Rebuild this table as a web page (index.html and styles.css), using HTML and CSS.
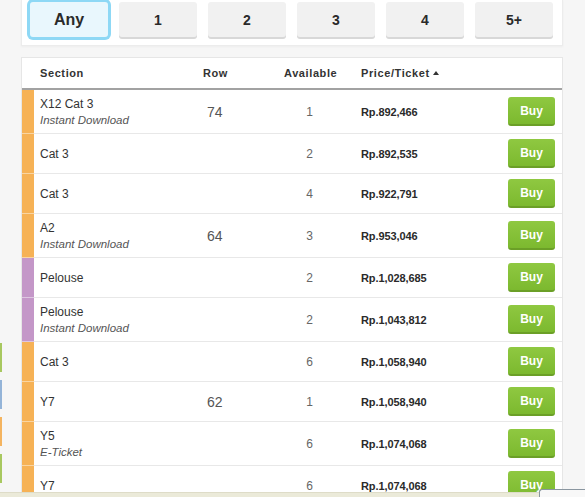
FILE: index.html
```html
<!DOCTYPE html>
<html>
<head>
<meta charset="utf-8">
<link rel="stylesheet" href="styles.css">
</head>
<body>
<div class="page">
  <div class="gutter">
    <span class="sliver green"></span>
    <span class="sliver blue"></span>
    <span class="sliver orange"></span>
    <span class="sliver green"></span>
  </div>
  <main class="main">
    <section class="qty-panel">
      <button class="qty active">Any</button>
      <button class="qty">1</button>
      <button class="qty">2</button>
      <button class="qty">3</button>
      <button class="qty">4</button>
      <button class="qty">5+</button>
    </section>
    <section class="table">
      <div class="thead">
        <span></span>
        <span>Section</span>
        <span>Row</span>
        <span>Available</span>
        <span class="sort">Price/Ticket <i class="caret"></i></span>
        <span></span>
      </div>
      <div class="row"><span class="bar orange"></span><div class="sec">X12 Cat 3<em>Instant Download</em></div><span class="rownum">74</span><span class="avail">1</span><span class="price">Rp.892,466</span><span class="cell-btn"><button class="buy">Buy</button></span></div>
      <div class="row"><span class="bar orange"></span><div class="sec">Cat 3</div><span class="rownum"></span><span class="avail">2</span><span class="price">Rp.892,535</span><span class="cell-btn"><button class="buy">Buy</button></span></div>
      <div class="row"><span class="bar orange"></span><div class="sec">Cat 3</div><span class="rownum"></span><span class="avail">4</span><span class="price">Rp.922,791</span><span class="cell-btn"><button class="buy">Buy</button></span></div>
      <div class="row"><span class="bar orange"></span><div class="sec">A2<em>Instant Download</em></div><span class="rownum">64</span><span class="avail">3</span><span class="price">Rp.953,046</span><span class="cell-btn"><button class="buy">Buy</button></span></div>
      <div class="row"><span class="bar purple"></span><div class="sec">Pelouse</div><span class="rownum"></span><span class="avail">2</span><span class="price">Rp.1,028,685</span><span class="cell-btn"><button class="buy">Buy</button></span></div>
      <div class="row"><span class="bar purple"></span><div class="sec">Pelouse<em>Instant Download</em></div><span class="rownum"></span><span class="avail">2</span><span class="price">Rp.1,043,812</span><span class="cell-btn"><button class="buy">Buy</button></span></div>
      <div class="row"><span class="bar orange"></span><div class="sec">Cat 3</div><span class="rownum"></span><span class="avail">6</span><span class="price">Rp.1,058,940</span><span class="cell-btn"><button class="buy">Buy</button></span></div>
      <div class="row"><span class="bar orange"></span><div class="sec">Y7</div><span class="rownum">62</span><span class="avail">1</span><span class="price">Rp.1,058,940</span><span class="cell-btn"><button class="buy">Buy</button></span></div>
      <div class="row"><span class="bar orange"></span><div class="sec">Y5<em>E-Ticket</em></div><span class="rownum"></span><span class="avail">6</span><span class="price">Rp.1,074,068</span><span class="cell-btn"><button class="buy">Buy</button></span></div>
      <div class="row"><span class="bar orange"></span><div class="sec">Y7</div><span class="rownum"></span><span class="avail">6</span><span class="price">Rp.1,074,068</span><span class="cell-btn"><button class="buy">Buy</button></span></div>
    </section>
  </main>
</div>
<div class="statusbar"></div>
<div class="statusbox"></div>
</body>
</html>
```

FILE: styles.css
```css
* { box-sizing: border-box; }
html, body { margin: 0; padding: 0; }
body {
  background: #f6f6f6;
  font-family: "Liberation Sans", Arial, sans-serif;
  color: #333;
  overflow: hidden;
  height: 497px;
}
.page {
  display: flex;
  align-items: flex-start;
}
.gutter {
  width: 21px;
  flex: none;
  display: flex;
  flex-direction: column;
  gap: 8px;
  padding-top: 343px;
}
.sliver {
  display: block;
  width: 2px;
  height: 29px;
}
.sliver.green { background: #a8c860; }
.sliver.blue { background: #94b4d8; }
.sliver.orange { background: #f4b460; }

.main {
  width: 542px;
  flex: none;
}
.qty-panel {
  background: #fff;
  border: 1px solid #ececec;
  border-top: none;
  box-shadow: 0 1px 2px rgba(0,0,0,0.04);
  display: grid;
  grid-template-columns: repeat(6, 78px);
  gap: 11px;
  padding: 2px 9px 7px 8px;
  height: 46px;
}
.qty {
  height: 35px;
  border: none;
  border-radius: 3px;
  background: #f1f1f1;
  box-shadow: 0 2px 0 #d8d8d8;
  font-family: "Liberation Sans", Arial, sans-serif;
  font-weight: bold;
  font-size: 14px;
  color: #2a2a2a;
  padding: 0;
}
.qty.active {
  background: #e9f7fd;
  box-shadow: 0 0 0 3px #8ed8f5;
  font-size: 16px;
}

.table {
  margin-top: 11px;
  background: #fff;
  border: 1px solid #e6e6e6;
  border-bottom: none;
}
.thead, .row {
  display: grid;
  grid-template-columns: 12px 169px 81px 77px 1fr 56px;
}
.thead {
  height: 32px;
  align-items: center;
  border-bottom: 2px solid #a2a2a2;
  font-weight: bold;
  font-size: 11px;
  letter-spacing: 0.6px;
  color: #333;
}
.thead > span:nth-child(2) { padding-left: 6px; }
.sort { display: flex; align-items: center; gap: 3px; }
.caret {
  display: inline-block;
  width: 0; height: 0;
  border-left: 3.5px solid transparent;
  border-right: 3.5px solid transparent;
  border-bottom: 4px solid #333;
  margin-top: -1px;
}
.row {
  border-bottom: 1px solid #e8e8e8;
  align-items: center;
  min-height: 40px;
}
.bar {
  align-self: stretch;
  margin-bottom: -1px;
  border-bottom: 1px solid rgba(255,255,255,0.45);
}
.bar.orange { background: #f6b256; }
.bar.purple { background: #c497c8; }
.sec {
  padding: 6px 0 5px 6px;
  font-size: 12px;
  line-height: 16px;
  color: #333;
  display: flex;
  flex-direction: column;
}
.sec em {
  font-size: 11.5px;
  line-height: 16px;
  color: #555;
}
.rownum {
  font-size: 14px;
  color: #555;
  padding-left: 4px;
}
.avail {
  font-size: 12px;
  color: #666;
  text-align: center;
  padding-right: 26px;
}
.price {
  font-size: 11px;
  font-weight: bold;
  color: #2a2a2a;
  font-family: "Liberation Sans", Arial, sans-serif;
  letter-spacing: -0.1px;
}
.cell-btn {
  padding: 5px 7px 5px 0;
  display: flex;
  justify-content: flex-end;
}
.buy {
  width: 47px;
  height: 29px;
  border: none;
  border-radius: 3px;
  background: linear-gradient(#8fc841, #7cb92f);
  border-bottom: 2px solid #6b9f27;
  color: #fff;
  font-family: "Liberation Sans", Arial, sans-serif;
  font-weight: bold;
  font-size: 12px;
  padding: 0;
}
.statusbar {
  position: fixed;
  left: 0; right: 0; bottom: 0;
  height: 5px;
  background: #ebead9;
  border-top: 1px solid #dedcc8;
}
.statusbox {
  position: fixed;
  right: 0; bottom: 0;
  width: 46px;
  height: 8px;
  background: #f8f8f8;
  border: 1px solid #8a96a0;
  border-right: none;
  border-bottom: none;
  border-top-left-radius: 3px;
}
```
